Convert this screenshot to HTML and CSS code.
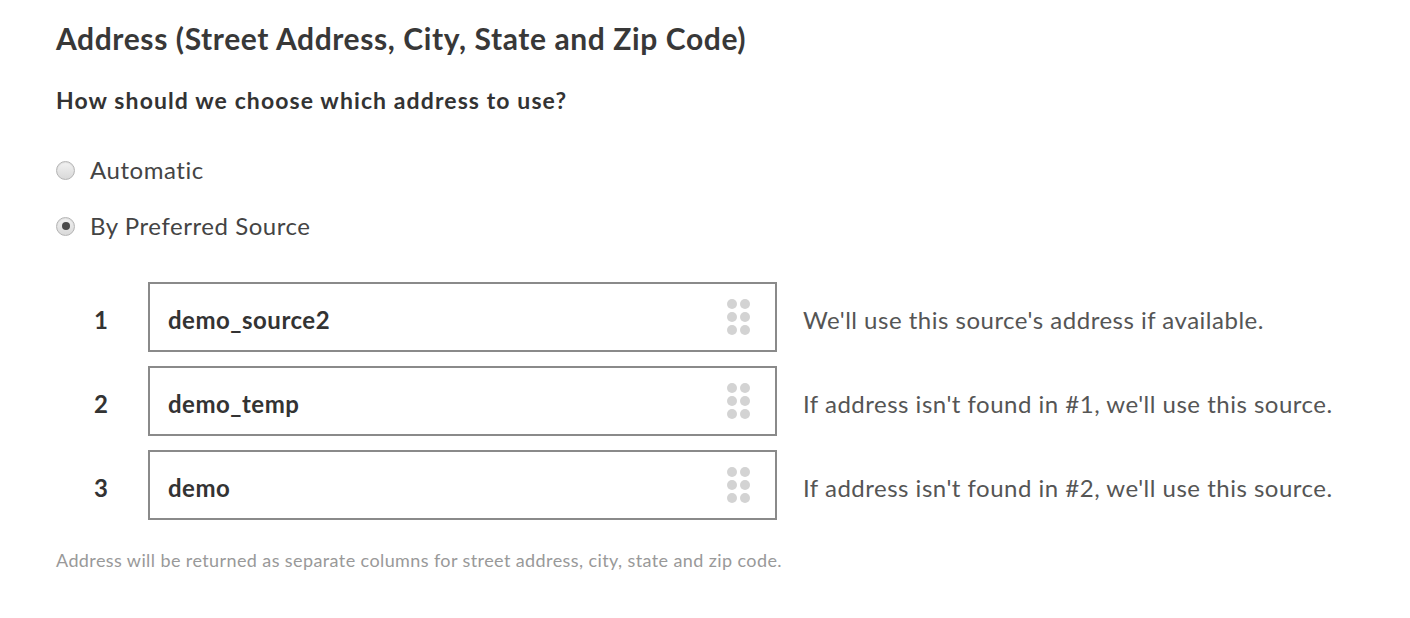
FILE: index.html
```html
<!DOCTYPE html>
<html lang="en">
<head>
    <meta charset="UTF-8">
    <meta name="viewport" content="width=device-width, initial-scale=1.0">
    <title>Address Settings</title>
    <link rel="stylesheet" href="styles.css">
</head>
<body>
    <h1>Address (Street Address, City, State and Zip Code)</h1>
    <h2>How should we choose which address to use?</h2>

    <div class="options">
        <label class="option">
            <input type="radio" name="choose" value="auto">
            <span class="radio"></span>
            Automatic
        </label>
        <label class="option">
            <input type="radio" name="choose" value="preferred" checked>
            <span class="radio"></span>
            By Preferred Source
        </label>
    </div>

    <div class="sources">
        <div class="source-row">
            <div class="num">1</div>
            <div class="source-box">
                <span class="source-name">demo_source2</span>
                <span class="handle"><i></i><i></i><i></i><i></i><i></i><i></i></span>
            </div>
            <div class="hint">We'll use this source's address if available.</div>
        </div>
        <div class="source-row">
            <div class="num">2</div>
            <div class="source-box">
                <span class="source-name">demo_temp</span>
                <span class="handle"><i></i><i></i><i></i><i></i><i></i><i></i></span>
            </div>
            <div class="hint">If address isn't found in #1, we'll use this source.</div>
        </div>
        <div class="source-row">
            <div class="num">3</div>
            <div class="source-box">
                <span class="source-name">demo</span>
                <span class="handle"><i></i><i></i><i></i><i></i><i></i><i></i></span>
            </div>
            <div class="hint">If address isn't found in #2, we'll use this source.</div>
        </div>
    </div>

    <p class="note">Address will be returned as separate columns for street address, city, state and zip code.</p>
</body>
</html>
```

FILE: styles.css
```css
body {
    font-family: 'Lato', 'Open Sans', sans-serif;
    color: #333;
    margin: 0;
    padding: 20px 56px;
    background-color: #fff;
}
h1 {
    font-size: 30px;
    font-weight: bold;
    letter-spacing: 0.6px;
    line-height: 36px;
    margin: 0;
    color: #383838;
}
h2 {
    font-size: 23px;
    font-weight: bold;
    letter-spacing: 1.1px;
    line-height: 28px;
    margin: 30px 0 0;
    color: #333;
}
.options {
    margin-top: 44px;
    display: flex;
    flex-direction: column;
    gap: 32px;
}
.option {
    display: flex;
    align-items: center;
    font-size: 24px;
    letter-spacing: 0.55px;
    line-height: 24px;
    color: #444;
    cursor: pointer;
}
.option input {
    display: none;
}
.radio {
    width: 17px;
    height: 17px;
    border: 1px solid #b4b4b4;
    border-radius: 50%;
    background: linear-gradient(#f2f2f2, #d9d9d9);
    margin-right: 15px;
    display: flex;
    align-items: center;
    justify-content: center;
    box-shadow: inset 0 1px 1px rgba(0,0,0,0.08);
}
.option input:checked + .radio::after {
    content: "";
    width: 8px;
    height: 8px;
    border-radius: 50%;
    background-color: #4a4a4a;
}
.sources {
    margin-top: 44px;
    display: flex;
    flex-direction: column;
    gap: 14px;
}
.source-row {
    display: flex;
    align-items: center;
}
.num {
    width: 90px;
    padding-top: 4px;
    text-align: center;
    font-size: 24px;
    font-weight: bold;
    color: #333;
}
.source-box {
    width: 629px;
    height: 70px;
    margin-left: 2px;
    box-sizing: border-box;
    border: 2px solid #8a8a8a;
    display: flex;
    align-items: center;
    justify-content: space-between;
    padding: 0 25px 0 18px;
}
.source-name {
    padding-top: 4px;
    font-size: 24px;
    font-weight: bold;
    letter-spacing: 0.5px;
    color: #333;
}
.handle {
    display: grid;
    grid-template-columns: 10px 10px;
    gap: 3px;
}
.handle i {
    width: 10px;
    height: 10px;
    border-radius: 50%;
    background-color: #d3d3d3;
}
.hint {
    margin-left: 26px;
    padding-top: 4px;
    font-size: 24px;
    letter-spacing: 0.5px;
    color: #555;
}
.note {
    margin: 29px 0 0;
    font-size: 18px;
    letter-spacing: 0.4px;
    color: #999;
}
```
